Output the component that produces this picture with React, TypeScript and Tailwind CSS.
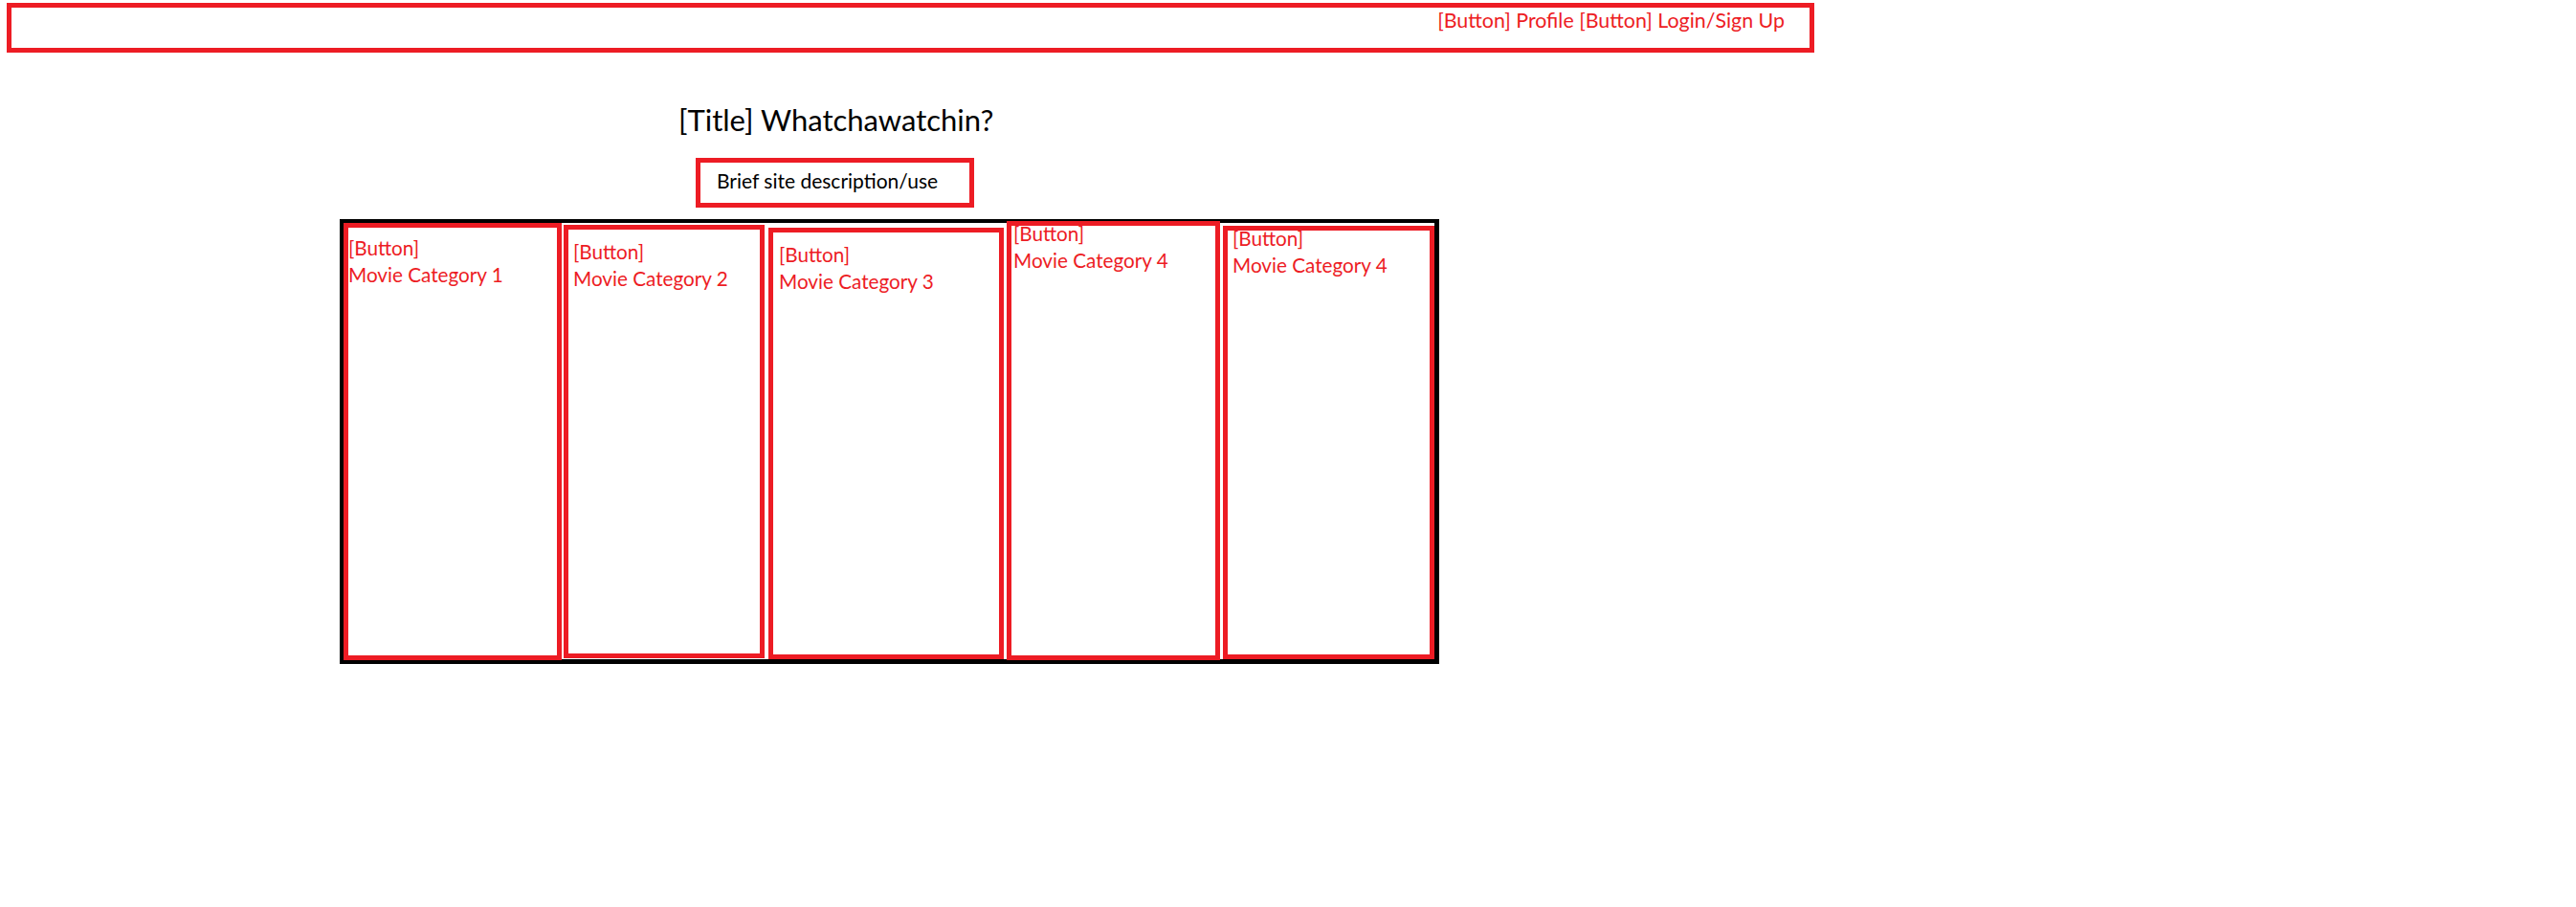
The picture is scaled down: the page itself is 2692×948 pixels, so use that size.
const red = "border-[#ed1c24]";

type Card = {
  label: string;
  box: string;
  text: string;
};

const cards: Card[] = [
  {
    label: "Movie Category 1",
    box: "ml-0 mt-0 w-[228px] h-[457px]",
    text: "pl-0 pt-[7px]",
  },
  {
    label: "Movie Category 2",
    box: "ml-[2px] mt-[2px] w-[210px] h-[453px]",
    text: "pl-[5px] pt-[9px]",
  },
  {
    label: "Movie Category 3",
    box: "ml-[4px] mt-[5px] w-[246px] h-[451px]",
    text: "pl-[6px] pt-[9px]",
  },
  {
    label: "Movie Category 4",
    box: "ml-[3px] -mt-[2px] w-[223px] h-[459px]",
    text: "pl-[2px] -mt-[6px]",
  },
  {
    label: "Movie Category 4",
    box: "ml-[3px] mt-[3px] w-[221px] h-[453px]",
    text: "pl-[5px] -mt-[6px]",
  },
];

export default function App() {
  return (
    <div className="w-[2692px] h-[948px] bg-white font-['Lato',sans-serif] flex flex-col items-start">
      {/* top nav */}
      <div
        className={`mt-[3px] ml-[7px] w-[1889px] h-[52px] border-[5px] ${red} flex justify-end items-start pr-[26px]`}
      >
        <span className="text-[21.4px] leading-[26px] text-[#ed1c24]">
          [Button] Profile [Button] Login/Sign Up
        </span>
      </div>

      <h1 className="mt-[50px] ml-[709px] text-[31px] leading-[40px] text-black">
        [Title] Whatchawatchin?
      </h1>

      <div
        className={`mt-[20px] ml-[727px] w-[291px] h-[52px] border-[5px] ${red} pl-[17px] pt-[4px]`}
      >
        <p className="text-[21px] leading-[30px] text-black">
          Brief site description/use
        </p>
      </div>

      <div className="mt-[12px] ml-[355px] w-[1149px] h-[465px] border-[4px] border-b-[5px] border-r-[5px] border-black flex items-start">
        {cards.map((c, i) => (
          <button
            key={i}
            className={`${c.box} shrink-0 border-[5px] ${red} bg-white text-left flex flex-col items-start justify-start`}
          >
            <div className={`${c.text} text-[20.7px] leading-[28px] text-[#ed1c24]`}>
              <div>[Button]</div>
              <div>{c.label}</div>
            </div>
          </button>
        ))}
      </div>
    </div>
  );
}
